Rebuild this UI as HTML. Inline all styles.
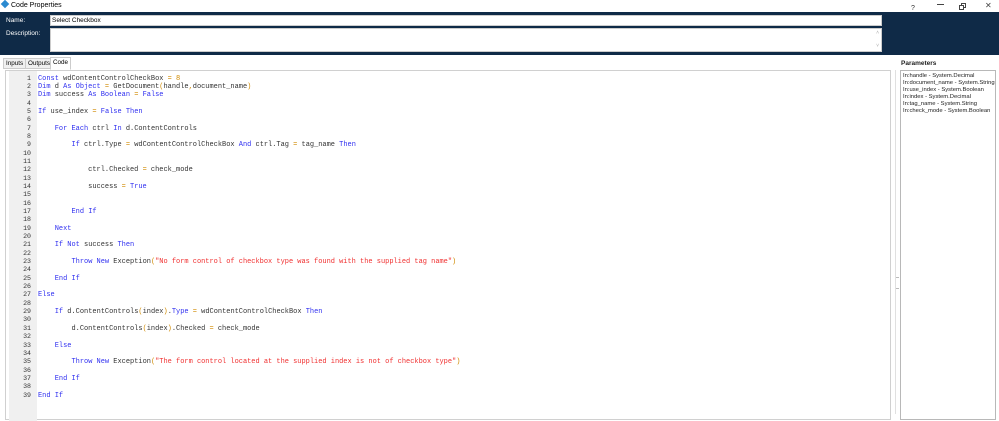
<!DOCTYPE html>
<html><head><meta charset="utf-8"><style>
*{margin:0;padding:0;box-sizing:border-box}
body{width:999px;height:414px;overflow:hidden;background:#fff;font-family:"Liberation Sans",sans-serif;position:relative}
.title{position:absolute;left:0;top:0;width:999px;height:12px;background:#fff;font-size:7px;line-height:11px}
.dark{position:absolute;left:0;top:12px;width:999px;height:43px;background:#0f2a47}
.lbl{position:absolute;color:#fff;font-size:6.5px}
.inp{position:absolute;background:#fff;border:1px solid #ccc;font-size:6.5px;padding-left:1px;line-height:9px}
.tabs{position:absolute;top:58px;font-size:6.3px;height:11px;line-height:10px;border:1px solid #ccc;background:#f0f0f0;padding:0 2px}
.code{position:absolute;left:5px;top:70px;width:886px;height:350px;border:1px solid #d0d0d0;background:#fff}
.gut{position:absolute;left:3px;top:0;width:28px;height:350px;background:#f0f0f0}
.ln{position:absolute;left:0;top:3.5px;width:22px;text-align:right;font-family:"Liberation Mono",monospace;font-size:6.6px;line-height:8.34px;color:#333}
.src{position:absolute;left:32px;top:3.5px;font-family:"Liberation Mono",monospace;font-size:6.97px;line-height:8.34px;color:#333;white-space:pre}
.k{color:#3030f0}.s{color:#f03030}.o{color:#d08a00}
.params{position:absolute;left:900px;top:70px;width:96px;height:350px;border:1px solid #b8b8b8;font-size:5.85px;line-height:6.9px;padding:2px 0 0 2px;color:#222;white-space:nowrap;overflow:hidden}
</style></head><body>
<div class="title"><span style="display:inline-block;width:6px;height:6px;background:#2a8ad0;margin:0 3px 0 2px;transform:rotate(45deg)"></span>Code Properties
<span style="position:absolute;left:911px;top:3px;font-size:7px;color:#333">?</span>
<span style="position:absolute;left:937px;top:4px;width:7px;height:1px;background:#444"></span>
<span style="position:absolute;left:961px;top:3px;width:5px;height:5px;border:1px solid #444"></span>
<span style="position:absolute;left:959px;top:5px;width:5px;height:5px;border:1px solid #444;background:#fff"></span>
<span style="position:absolute;left:985px;top:0px;font-size:8px;color:#444">✕</span></div>
<div class="dark">
<div class="lbl" style="left:6px;top:5px">Name:</div>
<div class="lbl" style="left:6px;top:18px">Description:</div>
<div class="inp" style="left:50px;top:3px;width:832px;height:11px">Select Checkbox</div>
<div class="inp" style="left:50px;top:16px;width:832px;height:24px"><span style="position:absolute;right:2px;top:0;color:#aaa;font-size:5px">˄</span><span style="position:absolute;right:2px;bottom:0;color:#aaa;font-size:5px">˅</span></div>
</div>
<div class="tabs" style="left:3px">Inputs</div>
<div class="tabs" style="left:25px">Outputs</div>
<div class="tabs" style="left:50px;background:#fff;border-bottom-color:#fff;top:57px;height:13px">Code</div>
<div class="code"><div class="gut"><div class="ln">1<br>2<br>3<br>4<br>5<br>6<br>7<br>8<br>9<br>10<br>11<br>12<br>13<br>14<br>15<br>16<br>17<br>18<br>19<br>20<br>21<br>22<br>23<br>24<br>25<br>26<br>27<br>28<br>29<br>30<br>31<br>32<br>33<br>34<br>35<br>36<br>37<br>38<br>39</div></div>
<div class="src"><span class="k">Const</span> wdContentControlCheckBox <span class="o">=</span> <span class="o">8</span>
<span class="k">Dim</span> d <span class="k">As Object</span> <span class="o">=</span> GetDocument<span class="o">(</span>handle<span class="o">,</span>document_name<span class="o">)</span>
<span class="k">Dim</span> success <span class="k">As Boolean</span> <span class="o">=</span> <span class="k">False</span>

<span class="k">If</span> use_index <span class="o">=</span> <span class="k">False Then</span>

    <span class="k">For Each</span> ctrl <span class="k">In</span> d.ContentControls

        <span class="k">If</span> ctrl.Type <span class="o">=</span> wdContentControlCheckBox <span class="k">And</span> ctrl.Tag <span class="o">=</span> tag_name <span class="k">Then</span>


            ctrl.Checked <span class="o">=</span> check_mode

            success <span class="o">=</span> <span class="k">True</span>


        <span class="k">End If</span>

    <span class="k">Next</span>

    <span class="k">If Not</span> success <span class="k">Then</span>

        <span class="k">Throw New</span> Exception<span class="o">(</span><span class="s">"No form control of checkbox type was found with the supplied tag name"</span><span class="o">)</span>

    <span class="k">End If</span>

<span class="k">Else</span>

    <span class="k">If</span> d.ContentControls<span class="o">(</span>index<span class="o">)</span>.<span class="k">Type</span> <span class="o">=</span> wdContentControlCheckBox <span class="k">Then</span>

        d.ContentControls<span class="o">(</span>index<span class="o">)</span>.Checked <span class="o">=</span> check_mode

    <span class="k">Else</span>

        <span class="k">Throw New</span> Exception<span class="o">(</span><span class="s">"The form control located at the supplied index is not of checkbox type"</span><span class="o">)</span>

    <span class="k">End If</span>

<span class="k">End If</span></div></div>
<div style="position:absolute;left:895px;top:70px;width:1px;height:344px;background:#e0e0e0"></div>
<div style="position:absolute;left:896px;top:277px;width:2px;height:12px;border-top:1px dotted #bbb;border-bottom:1px dotted #bbb"></div>
<div style="position:absolute;left:901px;top:60px;font-size:6.5px;font-weight:bold;color:#222">Parameters</div>
<div class="params">In:handle - System.Decimal<br>In:document_name - System.String<br>In:use_index - System.Boolean<br>In:index - System.Decimal<br>In:tag_name - System.String<br>In:check_mode - System.Boolean</div>
</body></html>
